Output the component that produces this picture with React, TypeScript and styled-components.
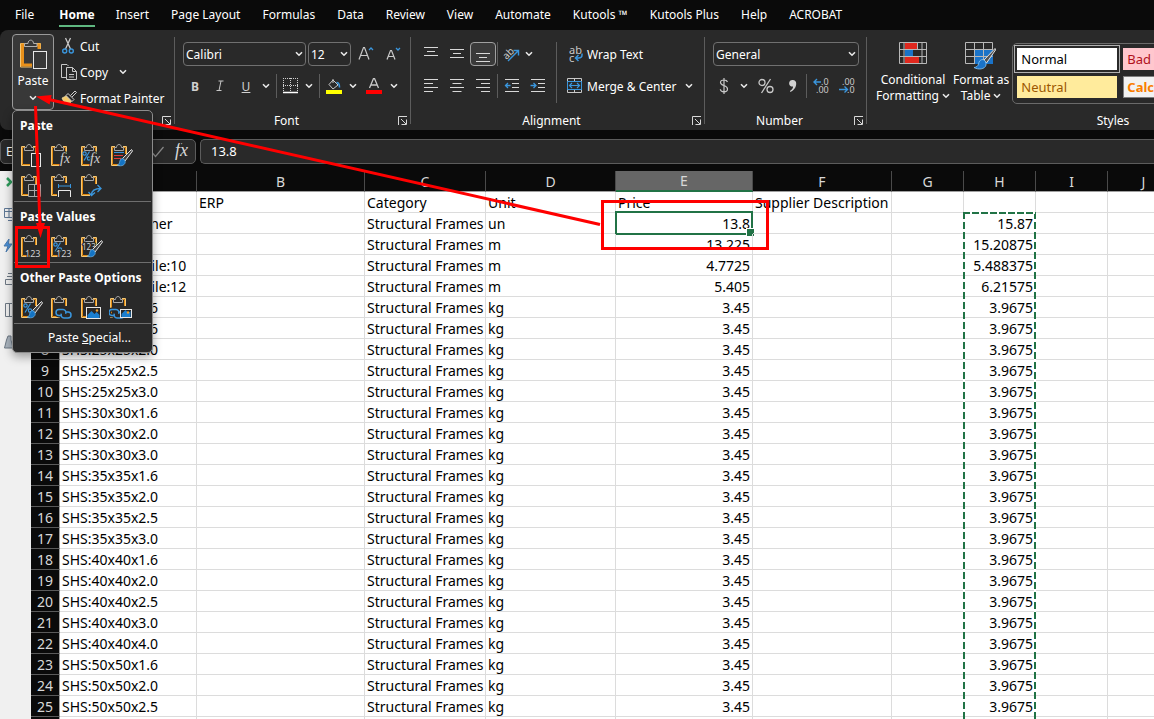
import React from 'react';
import styled, { createGlobalStyle, css } from 'styled-components';

const Global = createGlobalStyle`
  * { box-sizing: border-box; }
  body { margin: 0; background: #0a0a0a; font-family: 'Noto Sans', 'Open Sans', sans-serif; font-size: 12px; color: #fff; }
  button, select, input { font: inherit; color: inherit; }
  svg { display: block; flex: none; }
`;

const Window = styled.div`
  position: relative;
  display: flex;
  flex-direction: column;
  height: 100vh;
  overflow: hidden;
  background: #0a0a0a;
`;

/* ---------- tabs ---------- */
const TabBar = styled.nav`
  display: flex;
  height: 30px;
  padding-left: 4px;
  flex: none;
`;
const Tab = styled.a<{ $active?: boolean }>`
  display: flex;
  align-items: center;
  height: 30px;
  padding: 0 11px;
  color: #fff;
  text-decoration: none;
  white-space: nowrap;
  line-height: 16px;
  ${p => p.$active && css`
    font-weight: 700;
    padding: 0 10px 0 14px;
    span { padding: 4px 0 2px; border-bottom: 2px solid #5fb780; }
  `}
`;

/* ---------- ribbon ---------- */
const Ribbon = styled.div`
  display: flex;
  flex: none;
  height: 100px;
  background: #292929;
  border-radius: 8px 0 0 8px;
  overflow: hidden;
`;
const Group = styled.section<{ $width: number }>`
  display: flex;
  flex-direction: column;
  flex: none;
  width: ${p => p.$width}px;
  margin-top: 7px;
  height: 87px;
  border-right: 1px solid #5c5c5c;
`;
const GroupBody = styled.div<{ $left?: number; $gap?: number }>`
  display: flex;
  flex: 1;
  align-items: flex-start;
  gap: ${p => p.$gap ?? 0}px;
  padding: 5px 0 0 ${p => p.$left ?? 8}px;
`;
const GroupFooter = styled.div`
  display: flex;
  align-items: center;
  height: 12px;
  line-height: 12px;
  margin-bottom: -3px;
  > span { flex: 1; text-align: center; }
`;
const Stack = styled.div<{ $gap?: number }>`
  display: flex;
  flex-direction: column;
  gap: ${p => p.$gap ?? 8}px;
`;
const Row = styled.div<{ $gap?: number; $left?: number }>`
  display: flex;
  align-items: center;
  height: 24px;
  gap: ${p => p.$gap ?? 0}px;
  padding-left: ${p => p.$left ?? 0}px;
`;
const ToolButton = styled.button<{ $w?: number; $on?: boolean }>`
  display: flex;
  align-items: center;
  justify-content: center;
  flex: none;
  width: ${p => p.$w ?? 26}px;
  height: 24px;
  padding: 0;
  border: 1px solid ${p => (p.$on ? '#a0a0a0' : 'transparent')};
  border-radius: 4px;
  background: ${p => (p.$on ? '#3a3a3a' : 'transparent')};
  color: #d0d0d0;
`;
const LabelButton = styled.button`
  display: flex;
  align-items: center;
  height: 24px;
  padding: 0;
  border: 0;
  background: none;
  white-space: nowrap;
  > svg:first-child { margin-right: 4px; }
  > svg:not(:first-child) { margin-left: 8px; }
`;
const Launcher = styled.button`
  padding: 0;
  border: 0;
  width: 12px;
  height: 12px;
  background: none;
`;
const Divider = styled.i<{ $h?: number; $mx?: number }>`
  flex: none;
  width: 1px;
  height: ${p => p.$h ?? 24}px;
  margin: 0 ${p => p.$mx ?? 3}px;
  background: #5c5c5c;
`;
const SelectBox = styled.label<{ $w: number }>`
  display: flex;
  align-items: center;
  width: ${p => p.$w}px;
  height: 24px;
  padding-right: 2px;
  border: 1px solid #707070;
  border-radius: 4px;
  select {
    flex: 1;
    min-width: 0;
    height: 22px;
    padding: 0 0 0 2px;
    border: 0;
    outline: 0;
    appearance: none;
    background: transparent;
  }
  svg { pointer-events: none; }
`;
const PasteButton = styled.button`
  display: flex;
  flex-direction: column;
  align-items: center;
  width: 42px;
  height: 76px;
  margin: -8px 7px 0 0;
  padding: 4px 0 0;
  border: 1px solid #9a9a9a;
  border-radius: 4px;
  background: #383838;
  line-height: 16px;
  > span { margin: 3px 0 6px; }
`;
const ClipboardItems = styled.div`
  display: flex;
  flex-direction: column;
  margin-top: -9px;
`;
const ClipboardItem = styled(LabelButton)`
  height: 26px;
  > svg:first-child { margin-right: 3px; }
  > svg:not(:first-child) { margin-left: 11px; }
`;
const BigButton = styled.button`
  display: flex;
  flex-direction: column;
  align-items: center;
  padding: 0;
  border: 0;
  background: none;
  line-height: 16px;
  white-space: nowrap;
  > svg { margin-bottom: 2px; }
  > span { display: flex; align-items: center; gap: 3px; }
`;
const Gallery = styled.div`
  display: grid;
  grid-template-columns: repeat(3, 106px);
  grid-template-rows: 28px 28px;
  align-content: start;
  height: 61px;
  padding: 1px;
  margin-top: 1px;
  border: 1px solid #6a6a6a;
  border-radius: 5px;
`;
const StyleCell = styled.button<{ $bg: string; $fg: string; $selected?: boolean; $bold?: boolean; $edge?: string }>`
  padding: 2px;
  border: 1px solid ${p => (p.$selected ? '#b0b0b0' : 'transparent')};
  background: transparent;
  font-size: 13px;
  line-height: 20px;
  text-align: left;
  color: ${p => p.$fg};
  font-weight: ${p => (p.$bold ? 700 : 400)};
  span {
    display: block;
    height: 22px;
    padding-left: 3px;
    border: 1px solid ${p => p.$edge ?? p.$bg};
    background: ${p => p.$bg};
  }
`;

/* ---------- paste menu ---------- */
const Menu = styled.div`
  position: absolute;
  z-index: 5;
  left: 12px;
  top: 110px;
  width: 141px;
  border: 1px solid #8c8c8c;
  border-radius: 5px;
  background: #292929;
  box-shadow: 0 4px 10px rgba(0, 0, 0, 0.35);
`;
const MenuTitle = styled.h3`
  margin: 0;
  padding-left: 7px;
  font-size: 12px;
  font-weight: 700;
  line-height: 30px;
  height: 30px;
  white-space: nowrap;
`;
const MenuGrid = styled.div`
  display: grid;
  grid-template-columns: repeat(4, 30px);
  padding: 0 3px;
`;
const MenuIcon = styled.button`
  display: flex;
  align-items: center;
  justify-content: center;
  height: 30px;
  padding: 0 0 2px;
  border: 0;
  background: none;
`;
const MenuRule = styled.hr`
  height: 1px;
  margin: 0 1px;
  border: 0;
  background: #6e6e6e;
`;
const MenuItem = styled.button`
  display: block;
  width: 100%;
  height: 28px;
  padding: 0 0 2px 14px;
  border: 0;
  background: none;
`;

/* ---------- formula bar ---------- */
const FormulaBar = styled.div`
  display: flex;
  flex: none;
  gap: 4px;
  height: 41px;
  padding: 9px 0 8px;
`;
const NameBox = styled.div`
  display: flex;
  align-items: center;
  width: 196px;
  height: 25px;
  padding: 0 5px;
  border: 1px solid #5c5c5c;
  border-radius: 5px;
  background: #292929;
  input { width: 60px; padding: 0; border: 0; outline: 0; background: none; }
  button { padding: 0; border: 0; background: none; margin-left: 9px; }
  button:first-of-type { margin-left: auto; }
`;
const FormulaInput = styled.input`
  flex: 1;
  min-width: 0;
  height: 25px;
  padding: 0 10px 2px;
  border: 1px solid #5c5c5c;
  border-right: 0;
  border-radius: 5px 0 0 5px;
  background: #292929;
  font-size: 13px;
  outline: 0;
`;

/* ---------- sheet ---------- */
const Work = styled.div`
  display: flex;
  flex: 1;
  min-height: 0;
`;
const SideStrip = styled.aside`
  display: flex;
  flex-direction: column;
  gap: 16px;
  flex: none;
  width: 31px;
  padding: 3px 0 0 3px;
  background: #f0f0f0;
`;
const SheetView = styled.main`
  position: relative;
  flex: 1;
  min-width: 0;
  overflow: hidden;
  background: #fff;
`;
const Sheet = styled.table<{ $w: number }>`
  table-layout: fixed;
  width: ${p => p.$w}px;
  border-collapse: separate;
  border-spacing: 0;
  font-size: 14px;
  line-height: 18px;
  color: #000;
`;
const ColHead = styled.th<{ $on?: boolean }>`
  height: 21px;
  padding: ${p => (p.$on ? 1 : 2)}px 0 0;
  font-weight: 400;
  color: #d8d8d8;
  background: ${p => (p.$on ? '#666' : '#0a0a0a')};
  border-right: 1px solid #4a4a4a;
  border-bottom: ${p => (p.$on ? '2px solid #217346' : '1px solid #a0a0a0')};
`;
const RowHead = styled.th`
  height: 21px;
  padding: 2px 0 0;
  font-weight: 400;
  color: #d8d8d8;
  background: #0a0a0a;
  border-right: 1px solid #a0a0a0;
  border-bottom: 1px solid #5a5a5a;
`;
const Cell = styled.td<{ $num?: boolean; $on?: boolean }>`
  position: relative;
  height: 21px;
  padding: 2px 2px 0;
  white-space: nowrap;
  text-align: ${p => (p.$num ? 'right' : 'left')};
  border-right: 1px solid #dcdcdc;
  border-bottom: 1px solid #dcdcdc;
  ${p => p.$on && css`
    &::before {
      content: '';
      position: absolute;
      inset: -2px -1px -2px -1px;
      border: 2px solid #217346;
    }
    &::after {
      content: '';
      position: absolute;
      right: -3px;
      bottom: -4px;
      width: 7px;
      height: 7px;
      border: 1px solid #fff;
      background: #217346;
    }
  `}
`;
const CopyMarquee = styled.div`
  position: absolute;
  left: 932px;
  top: 41px;
  bottom: 0;
  width: 73px;
  pointer-events: none;
  background:
    repeating-linear-gradient(90deg, #217346 0 7px, #fff 7px 9px) top / 100% 2px no-repeat,
    repeating-linear-gradient(180deg, #217346 0 7px, #fff 7px 10px) left / 2px 100% no-repeat,
    repeating-linear-gradient(180deg, #217346 0 7px, #fff 7px 10px) right / 2px 100% no-repeat;
`;
const Markup = styled.svg`
  position: absolute;
  z-index: 10;
  left: 0;
  top: 0;
  pointer-events: none;
`;

/* ---------- icons ---------- */
const BLUE = '#3a96dd';
const Chevron = () => (
  <svg width="8" height="6" viewBox="0 0 8 6" fill="none" stroke="#e8e8e8" strokeWidth="1.6"><path d="M1 1.2l3 3 3-3" /></svg>
);
const LaunchIcon = () => (
  <svg width="10" height="10" viewBox="0 0 10 10" fill="none" stroke="#d8d8d8" strokeWidth="1"><path d="M.5 9V.5H9M3 3l5 5M8.5 3.5v5h-5" /></svg>
);
const Lines = ({ d }: { d: string }) => (
  <svg width="16" height="16" viewBox="0 0 16 16" stroke="#d8d8d8" fill="none"><path d={d} /></svg>
);
const Brush = () => (
  <g>
    <path d="M22.500 6.500L13.500 15.500l2.500 2.500 7.500-10z" fill="#444" stroke="#e0e0e0" strokeWidth="1" />
    <path d="M13.600 15.600c-2.400 0-2.600 2-3.100 4-.3 1.500-1.500 2.200-2.500 2.500 3 1.500 7.500.8 8.200-2.600.3-1.800-.9-3.500-2.600-3.900z" fill="#1474c4" stroke="#7cc0f0" strokeWidth=".6" />
  </g>
);
const Digits = ({ x = 6, y = 23, size = 9 }) => (
  <text x={x} y={y} fontSize={size} fill="#d0d0d0" stroke="#292929" strokeWidth="2" paintOrder="stroke">123</text>
);
const Percent = ({ x = 5 }) => (
  <g fill="none" stroke={BLUE} strokeWidth="1.200"><circle cx={x + 1.500} cy="10.500" r="1.700" /><circle cx={x + 6} cy="15.500" r="1.700" /><path d={`M${x + 6.500} 8.500L${x + 1} 17.500`} /></g>
);
const Fx = ({ x = 11 }) => (
  <text x={x} y="20" fontSize="14" fontStyle="italic" fontFamily="Liberation Serif, serif" fill="#d0d0d0" stroke="#292929" strokeWidth="2" paintOrder="stroke">fx</text>
);
const Links = ({ x = 0 }) => (
  <g transform={`translate(${x} 0)`} fill="none">
    {['#292929', BLUE].map((c, i) => (
      <g key={c} stroke={c} strokeWidth={i ? 1.500 : 4}>
        <path d="M12 20.500H10a3 3 0 010-6h4a3 3 0 012.600 4.300" />
        <path d="M16.500 17H19a3 3 0 010 6h-4a3 3 0 01-2.600-4.300" />
      </g>
    ))}
  </g>
);
const Picture = ({ x = 6, y = 12, w = 14, h = 11 }) => (
  <g>
    <rect x={x + .5} y={y + .5} width={w} height={h} fill="#292929" stroke="#e8e8e8" />
    <path d={`M${x + 1.500} ${y + h}v-3l4-4 3 3 2-2 ${w - 11} 3v3z`} fill="#1b7fd0" />
    <circle cx={x + w - 3} cy={y + 3.500} r="1.200" fill="#f0a030" />
  </g>
);
const Clip = ({ children, shift = 0 }: { children?: React.ReactNode; shift?: number }) => (
  <svg width="24" height="24" viewBox="0 0 24 24" fill="none">
    <g transform={`translate(${shift} 0)`}>
      <path d="M6 3.500H2.500V22.500H11M14 3.500H17.500V11" stroke="#f6c873" />
      <path d="M6 4.500H3.500V21.500H11M14 4.500H16.500V11" stroke="#e08a12" />
      <path d="M5.500 7.500V4.500H7.500C7.500 .5 12.500 .5 12.500 4.500H14.500V7.500Z" fill="#292929" stroke="#a8a8a8" />
    </g>
    {children}
  </svg>
);

const pasteIcons: [string, React.ReactNode][] = [
  ['Paste', <Clip><rect x="12.500" y="10.500" width="9" height="13" fill="#292929" stroke="#e8e8e8" /></Clip>],
  ['Formulas', <Clip><Fx /></Clip>],
  ['Formulas & Number Formatting', <Clip><Percent x={4} /><Fx /></Clip>],
  ['Keep Source Formatting', <Clip><path d="M5 9.500h10" stroke={BLUE} /><path d="M5 12.500h9M5 15.500h7" stroke="#e23b3b" /><Brush /></Clip>],
  ['No Borders', <Clip><path d="M9.500 11.500h12v12h-12zM15.500 11.500v12M9.500 17.500h12" fill="#292929" stroke="#a8a8a8" /></Clip>],
  ['Keep Source Column Widths', <Clip><path d="M8 10h15v14H8z" fill="#292929" /><path d="M9.500 11v4M21.500 11v4M9.500 13h12" stroke={BLUE} /><path d="M9.500 24v-6.500h12V24" stroke="#e8e8e8" /></Clip>],
  ['Transpose', <Clip><path d="M11 11h12v13H11z" fill="#292929" /><path d="M12.500 22c0-4 2-6.500 9.500-6.500M9.500 19l3 3.500 3.500-3M18.500 12l3.500 3.500-3.500 3.500" stroke={BLUE} strokeWidth="1.300" /></Clip>],
];
const valueIcons: [string, React.ReactNode][] = [
  ['Values', <Clip><Digits /></Clip>],
  ['Values & Number Formatting', <Clip><Percent /><Digits x={7} /></Clip>],
  ['Values & Source Formatting', <Clip><Digits x={3} y={16} size={8} /><Brush /></Clip>],
];
const otherIcons: [string, React.ReactNode][] = [
  ['Formatting', <Clip><Percent /><Brush /></Clip>],
  ['Paste Link', <Clip><Links /></Clip>],
  ['Picture', <Clip><Picture x={7} /></Clip>],
  ['Linked Picture', <Clip shift={-1}><Links x={-7} /><Picture x={11} y={14} w={11} h={8} /></Clip>],
];

const MiniTable = ({ children }: { children: React.ReactNode }) => (
  <svg width="32" height="28" viewBox="0 0 32 28" fill="none">{children}</svg>
);

/* ---------- data ---------- */
const tabs = ['File', 'Home', 'Insert', 'Page Layout', 'Formulas', 'Data', 'Review', 'View', 'Automate', 'Kutools ™', 'Kutools Plus', 'Help', 'ACROBAT'];
const columns: [string, number][] = [['A', 137], ['B', 168], ['C', 121], ['D', 130], ['E', 137], ['F', 139], ['G', 72], ['H', 72], ['I', 72], ['J', 72], ['K', 72]];
const sheetWidth = 29 + columns.reduce((sum, c) => sum + c[1], 0);

const sizes = ['20x20x1.6', '25x25x1.6', '25x25x2.0', '25x25x2.5', '25x25x3.0', '30x30x1.6', '30x30x2.0', '30x30x3.0', '35x35x1.6', '35x35x2.0', '35x35x2.5', '35x35x3.0', '40x40x1.6', '40x40x2.0', '40x40x2.5', '40x40x3.0', '40x40x4.0', '50x50x1.6', '50x50x2.0', '50x50x2.5', '50x50x3.0', '50x50x4.0', '50x50x5.0'];
const rows: string[][] = [
  ['Name', 'ERP', 'Category', 'Unit', 'Price', 'Supplier Description', '', ''],
  ['Universal Corner', '', 'Structural Frames', 'un', '13.8', '', '', '15.87'],
  ['Hinge', '', 'Structural Frames', 'm', '13.225', '', '', '15.20875'],
  ['Steel Bar Profile:10', '', 'Structural Frames', 'm', '4.7725', '', '', '5.488375'],
  ['Steel Bar Profile:12', '', 'Structural Frames', 'm', '5.405', '', '', '6.21575'],
  ...sizes.map(s => ['SHS:' + s, '', 'Structural Frames', 'kg', '3.45', '', '', '3.9675']),
];

const MenuIcons = ({ items }: { items: [string, React.ReactNode][] }) => (
  <MenuGrid>{items.map(([name, icon]) => <MenuIcon key={name} aria-label={name}>{icon}</MenuIcon>)}</MenuGrid>
);
const Footer = ({ label }: { label: string }) => (
  <GroupFooter><span>{label}</span><Launcher aria-label={`${label || 'Clipboard'} settings`}><LaunchIcon /></Launcher></GroupFooter>
);
const Drop = ({ label, w = 14 }: { label: string; w?: number }) => <ToolButton $w={w} aria-label={label}><Chevron /></ToolButton>;

export default function App() {
  return (
    <Window>
      <Global />
      <TabBar>
        {tabs.map(t => <Tab key={t} href="#" $active={t === 'Home'}><span>{t}</span></Tab>)}
      </TabBar>

      <Ribbon>
        <Group $width={175}>
          <GroupBody $left={12}>
            <PasteButton>
              <svg width="28" height="31" viewBox="0 0 28 31" fill="none">
                <path d="M7 4.500H1.500V28H13M17 4.500h4.500V10" stroke="#f6c873" />
                <path d="M7 6H3.500V26H13M17 6h3V10" stroke="#e8901a" strokeWidth="3" />
                <path d="M5.500 7.500v-3h3.500C9 0 14.500 0 14.500 4.500H18v3z" fill="#383838" stroke="#b0b0b0" />
                <rect x="14.500" y="12.500" width="13" height="17" fill="#383838" stroke="#e8e8e8" />
              </svg>
              <span>Paste</span>
              <Chevron />
            </PasteButton>
            <ClipboardItems>
              <ClipboardItem>
                <svg width="16" height="18" viewBox="0 0 16 18" fill="none">
                  <path d="M4.500 1l5 11M9.500 1l-5 11" stroke="#c8c8c8" strokeWidth="1.300" />
                  <circle cx="3.700" cy="14" r="2" stroke={BLUE} strokeWidth="1.400" /><circle cx="10.300" cy="14" r="2" stroke={BLUE} strokeWidth="1.400" />
                </svg>
                Cut
              </ClipboardItem>
              <ClipboardItem>
                <svg width="16" height="18" viewBox="0 0 16 18" fill="none" stroke="#c8c8c8">
                  <path d="M5 14.500H.5V1.500H6l1.500 1.500" /><path d="M5.500 4.500h6l4 4v8h-10zM11.500 4.500v4h4M8 11.500h5M8 14h5" />
                </svg>
                Copy<Chevron />
              </ClipboardItem>
              <ClipboardItem>
                <svg width="16" height="16" viewBox="0 0 16 16" fill="none">
                  <path d="M1 8l5-2.500 5 5L8 14.500C5 14 2 11.500 1 8z" fill="#f3c969" stroke="#fff0c0" strokeWidth=".6" />
                  <path d="M5 5.500l2-2 6 6-2 2zM9.500 5.500l4.500-4.500 1.500 1.500L11 7" fill="#292929" stroke="#d0d0d0" />
                </svg>
                Format Painter
              </ClipboardItem>
            </ClipboardItems>
          </GroupBody>
          <Footer label="" />
        </Group>

        <Group $width={236}>
          <GroupBody>
            <Stack>
              <Row $gap={2}>
                <SelectBox $w={123}><select aria-label="Font"><option>Calibri</option></select><Chevron /></SelectBox>
                <SelectBox $w={43}><select aria-label="Font size"><option>12</option></select><Chevron /></SelectBox>
                <ToolButton aria-label="Increase font size">
                  <svg width="16" height="16" viewBox="0 0 16 16" fill="none"><path d="M1 13.500L5.500 1.500h1L11 13.500M2.800 9.500h6.400" stroke="#c8c8c8" strokeWidth="1.200" /><path d="M11 4l2-2 2 2" stroke={BLUE} strokeWidth="1.300" /></svg>
                </ToolButton>
                <ToolButton aria-label="Decrease font size">
                  <svg width="16" height="16" viewBox="0 0 16 16" fill="none"><path d="M1 13.500L4.500 4.500h1L9 13.500M2.500 10.500h5" stroke="#c8c8c8" strokeWidth="1.200" /><path d="M10 2l2 2 2-2" stroke={BLUE} strokeWidth="1.300" /></svg>
                </ToolButton>
              </Row>
              <Row>
                <ToolButton $w={24}><b>B</b></ToolButton>
                <ToolButton aria-label="Italic"><svg width="10" height="12" viewBox="0 0 10 12" stroke="#c8c8c8" fill="none"><path d="M3.500 1h5M1.500 10.500h5M6 1L4 10.500" /></svg></ToolButton>
                <ToolButton><u>U</u></ToolButton>
                <Drop label="Underline styles" />
                <Divider />
                <ToolButton $w={22} aria-label="Borders">
                  <svg width="16" height="16" viewBox="0 0 16 16" fill="none"><path d="M.5 0v14M7.500 0v14M14.500 0v14M0 .5h15M0 7.500h15" stroke="#d0d0d0" strokeDasharray="1 1" /><path d="M0 14.500h15" stroke="#fff" strokeWidth="1.500" /></svg>
                </ToolButton>
                <Drop label="Border styles" />
                <Divider />
                <ToolButton $w={22} aria-label="Fill color">
                  <svg width="16" height="16" viewBox="0 0 16 16" fill="none"><path d="M7 2l5 5-5 4-4-4.500zM7 5V1" stroke="#c8c8c8" /><path d="M10.500 4.500c2.500 0 3 2 3 5" stroke={BLUE} strokeWidth="1.600" /><path d="M0 12h16v4H0z" fill="#ff0" /></svg>
                </ToolButton>
                <Drop label="Fill colors" w={16} />
                <ToolButton aria-label="Font color">
                  <svg width="16" height="16" viewBox="0 0 16 16" fill="none"><path d="M3.500 10L7.500 .5h1L12.500 10M5 7h6" stroke="#c8c8c8" strokeWidth="1.300" /><path d="M0 12h16v4H0z" fill="#f00" /></svg>
                </ToolButton>
                <Drop label="Font colors" />
              </Row>
            </Stack>
          </GroupBody>
          <Footer label="Font" />
        </Group>

        <Group $width={294}>
          <GroupBody $left={7}>
            <Stack>
              <Row>
                <ToolButton aria-label="Top align"><Lines d="M1 1.500h14M4 5.500h8M1 9.500h14" /></ToolButton>
                <ToolButton aria-label="Middle align"><Lines d="M1 3.500h14M4 7.500h8M1 11.500h14" /></ToolButton>
                <ToolButton $on aria-label="Bottom align"><Lines d="M1 7.500h14M4 11.500h8M1 15.500h14" /></ToolButton>
                <Divider $mx={1} />
                <ToolButton $w={24} aria-label="Orientation">
                  <svg width="18" height="18" viewBox="0 0 18 18" fill="none"><text x="0" y="10" fontSize="10" fill="#c8c8c8" transform="rotate(-45 6 8) translate(0 2)">ab</text><path d="M6 16L16 6M11.500 5.500H16.500V10.500" stroke={BLUE} strokeWidth="1.400" /></svg>
                </ToolButton>
                <Drop label="Orientation options" w={12} />
              </Row>
              <Row>
                <ToolButton aria-label="Align left"><Lines d="M1 1.500h14M1 5.500h9M1 9.500h14M1 13.500h9" /></ToolButton>
                <ToolButton aria-label="Center"><Lines d="M1 1.500h14M3.500 5.500h9M1 9.500h14M3.500 13.500h9" /></ToolButton>
                <ToolButton aria-label="Align right"><Lines d="M1 1.500h14M6 5.500h9M1 9.500h14M6 13.500h9" /></ToolButton>
                <Divider $mx={1} />
                <ToolButton aria-label="Decrease indent">
                  <svg width="16" height="16" viewBox="0 0 16 16" fill="none"><path d="M1 1.500h14M8 5.500h7M8 9.500h7M1 13.500h14" stroke="#d8d8d8" /><path d="M6.500 7.500H1.500M4 5L1.500 7.500 4 10" stroke={BLUE} strokeWidth="1.300" /></svg>
                </ToolButton>
                <ToolButton aria-label="Increase indent">
                  <svg width="16" height="16" viewBox="0 0 16 16" fill="none"><path d="M1 1.500h14M8 5.500h7M8 9.500h7M1 13.500h14" stroke="#d8d8d8" /><path d="M.5 7.500H5.500M3.500 5L6 7.500 3.500 10" stroke={BLUE} strokeWidth="1.300" /></svg>
                </ToolButton>
              </Row>
            </Stack>
            <Divider $h={61} $mx={5} />
            <Stack>
              <Row $left={5}>
                <LabelButton>
                  <svg width="16" height="18" viewBox="0 0 16 18" fill="none"><text x="2" y="9" fontSize="11" fill="#c8c8c8">ab</text><text x="2" y="17" fontSize="11" fill="#c8c8c8">c</text><path d="M15 8.500v1.500c0 2-1.500 3-3.500 3H9M11.500 10l-3 3 3 3" stroke={BLUE} strokeWidth="1.500" /></svg>
                  Wrap Text
                </LabelButton>
              </Row>
              <Row $left={5}>
                <LabelButton>
                  <svg width="16" height="16" viewBox="0 0 16 16" fill="none"><path d="M.5 .5h14v14H.5zM7.500 .5v3M7.500 12v3" stroke="#c8c8c8" /><path d="M.5 3.500h14v8H.5z" fill="#292929" stroke={BLUE} /><path d="M2.500 7.500h10M5 5L2.500 7.500 5 10M10 5l2.500 2.500L10 10" stroke={BLUE} strokeWidth="1.200" /></svg>
                  Merge &amp; Center<Chevron />
                </LabelButton>
              </Row>
            </Stack>
          </GroupBody>
          <Footer label="Alignment" />
        </Group>

        <Group $width={162}>
          <GroupBody $left={6}>
            <Stack>
              <Row $left={2}>
                <SelectBox $w={146}><select aria-label="Number format"><option>General</option></select><Chevron /></SelectBox>
              </Row>
              <Row>
                <ToolButton aria-label="Accounting format"><svg width="12" height="18" viewBox="0 0 12 18" fill="none" stroke="#c8c8c8" strokeWidth="1.200"><path d="M9.500 5C9 3.500 7.500 3 6 3 4 3 2.500 4 2.500 5.500 2.500 9.500 9.500 7.500 9.500 12c0 1.800-1.500 2.800-3.500 2.800S2.500 13.800 2.300 12.200M6 1v16" /></svg></ToolButton>
                <Drop label="Currency" />
                <ToolButton $w={30} aria-label="Percent style"><svg width="16" height="16" viewBox="0 0 16 16" fill="none" stroke="#c8c8c8" strokeWidth="1.300"><circle cx="4" cy="4.500" r="3" /><circle cx="12" cy="11.500" r="3" /><path d="M12.500 1l-9 14" /></svg></ToolButton>
                <ToolButton $w={24} aria-label="Comma style"><svg width="10" height="14" viewBox="0 0 10 14"><path d="M4.800 1a3.300 3.300 0 013.400 3.600C8.200 8.500 6 11.500 2.500 13l-.6-1C4 10.800 5 9.300 5.100 7.500A3.300 3.300 0 114.800 1z" fill="#d0d0d0" /></svg></ToolButton>
                <Divider $mx={1} />
                <ToolButton aria-label="Increase decimal"><svg width="16" height="16" viewBox="0 0 16 16" fill="none"><text x="8" y="7" fontSize="9" fill="#c8c8c8">.0</text><text x="3" y="15" fontSize="9" fill="#c8c8c8">.00</text><path d="M8 4H1M4 1L1 4l3 3" stroke={BLUE} strokeWidth="1.400" /></svg></ToolButton>
                <ToolButton aria-label="Decrease decimal"><svg width="16" height="16" viewBox="0 0 16 16" fill="none"><text x="3" y="7" fontSize="9" fill="#c8c8c8">.00</text><text x="8" y="15" fontSize="9" fill="#c8c8c8">.0</text><path d="M0 11.500h8M5.500 8.500l3 3-3 3" stroke={BLUE} strokeWidth="1.400" /></svg></ToolButton>
              </Row>
            </Stack>
          </GroupBody>
          <Footer label="Number" />
        </Group>

        <Group $width={505}>
          <GroupBody $left={9} $gap={3}>
            <BigButton>
              <MiniTable>
                <path d="M2.500 .5h27v21h-27zM2.500 7.500h27M2.500 14.500h27M11.500 .5v21M20.500 .5v21M25 .5v21M7 .5v21" stroke="#b8b8b8" />
                <path d="M8 1h12v6H8zM8 15h14v6H8z" fill="#e0281e" /><path d="M8 8h8v6H8z" fill="#1a73c8" /><path d="M16 8h5v6h-5z" fill="#292929" />
              </MiniTable>
              <span>Conditional</span><span>Formatting <Chevron /></span>
            </BigButton>
            <BigButton>
              <MiniTable>
                <path d="M.5 .5h27v21H.5z" stroke="#b8b8b8" />
                <path d="M10 8h18v14H10z" fill="#1a73c8" />
                <path d="M.5 7.500h27M.5 14.500h27M9.500 .5v21M18.500 .5v21" stroke="#b8b8b8" />
                <path d="M30 6.500L19 18l2.500 3L30.500 8z" fill="#555" stroke="#e0e0e0" />
                <path d="M18 17.500c-3 0-4 2-4.500 4.500-.4 2-2.500 3.500-4.500 3.500 4 2.500 11 2 12-2.500.4-2.500-1-5-3-5.500z" fill="#1a73c8" stroke="#8cc8f4" strokeWidth=".8" />
              </MiniTable>
              <span>Format as</span><span>Table <Chevron /></span>
            </BigButton>
            <Gallery>
              <StyleCell $bg="#fff" $fg="#000" $selected><span>Normal</span></StyleCell>
              <StyleCell $bg="#ffc7ce" $fg="#b0101c"><span>Bad</span></StyleCell>
              <StyleCell $bg="#c6efce" $fg="#006100"><span>Good</span></StyleCell>
              <StyleCell $bg="#ffeb9c" $fg="#9c5700"><span>Neutral</span></StyleCell>
              <StyleCell $bg="#f2f2f2" $fg="#fa7d00" $edge="#7f7f7f" $bold><span>Calculation</span></StyleCell>
            </Gallery>
          </GroupBody>
          <Footer label="Styles" />
        </Group>
      </Ribbon>

      <FormulaBar>
        <NameBox>
          <input aria-label="Name box" defaultValue="E2" />
          <button aria-label="Enter"><svg width="14" height="12" viewBox="0 0 14 12" fill="none" stroke="#888" strokeWidth="1.200"><path d="M1 6.500l3.500 4L12.500 1" /></svg></button>
          <button aria-label="Insert function"><svg width="16" height="18" viewBox="0 0 16 18"><text x="1" y="13" fontSize="18" fontStyle="italic" fontFamily="Liberation Serif, serif" fill="#d8d8d8">fx</text></svg></button>
        </NameBox>
        <FormulaInput aria-label="Formula" defaultValue="13.8" />
      </FormulaBar>

      <Work>
        <SideStrip>
          {[
            <path key="a" d="M4 4l4 4-4 4" stroke="#2e9c5c" strokeWidth="2.500" />,
            <path key="b" d="M1.500 2.500h13v9h-13zM1.500 5.500h13M6 2.500v9M5 14.500h10" stroke="#5f7896" />,
            <path key="c" d="M6 1L1 8h4l-2 6 6-8H5.500z" fill="#4a90d8" stroke="#4a7cb0" />,
            <path key="d" d="M5 3.500h10M4 6.500h11M2.500 9.500h12v5h-12z" stroke="#6d7884" />,
            <path key="e" d="M2.500 1.500h12v13h-12zM6.500 1.500v13M10 1.500v13" stroke="#6d7884" />,
            <path key="f" d="M5 2h3v4l2 8H1.500l2-8z" fill="#aab4be" stroke="#6d7884" />,
          ].map((p, i) => <svg key={i} width="16" height="16" viewBox="0 0 16 16" fill="none">{p}</svg>)}
        </SideStrip>
        <SheetView>
          <Sheet $w={sheetWidth}>
            <colgroup>
              <col width={29} />
              {columns.map(([c, w]) => <col key={c} width={w} />)}
            </colgroup>
            <thead>
              <tr>
                <ColHead aria-label="Select all" />
                {columns.map(([c]) => <ColHead key={c} scope="col" $on={c === 'E'}>{c}</ColHead>)}
              </tr>
            </thead>
            <tbody>
              {rows.map((r, i) => (
                <tr key={i}>
                  <RowHead scope="row">{i + 1}</RowHead>
                  {columns.map(([c], j) => (
                    <Cell key={c} $num={i > 0 && (c === 'E' || c === 'H')} $on={i === 1 && c === 'E'}>{r[j]}</Cell>
                  ))}
                </tr>
              ))}
            </tbody>
          </Sheet>
          <CopyMarquee />
        </SheetView>
      </Work>

      <Menu role="menu">
        <MenuTitle>Paste</MenuTitle>
        <MenuIcons items={pasteIcons} />
        <MenuRule />
        <MenuTitle>Paste Values</MenuTitle>
        <MenuIcons items={valueIcons} />
        <MenuRule />
        <MenuTitle>Other Paste Options</MenuTitle>
        <MenuIcons items={otherIcons} />
        <MenuRule />
        <MenuItem>Paste <u>S</u>pecial...</MenuItem>
      </Menu>

      <Markup width="780" height="280" viewBox="0 0 780 280" fill="none" stroke="#f00" strokeWidth="3" aria-hidden="true">
        <rect x="602.500" y="201.500" width="165" height="47" />
        <path d="M600 224.500L49 99.500" />
        <path d="M36 96.500l15.600-1.500-2 9.500z" fill="#f00" stroke="none" />
        <rect x="16.500" y="227.500" width="32" height="39" />
        <path d="M35.500 106L40 226" />
        <path d="M36 223h9l-4.500 15z" fill="#f00" stroke="none" />
      </Markup>
    </Window>
  );
}
